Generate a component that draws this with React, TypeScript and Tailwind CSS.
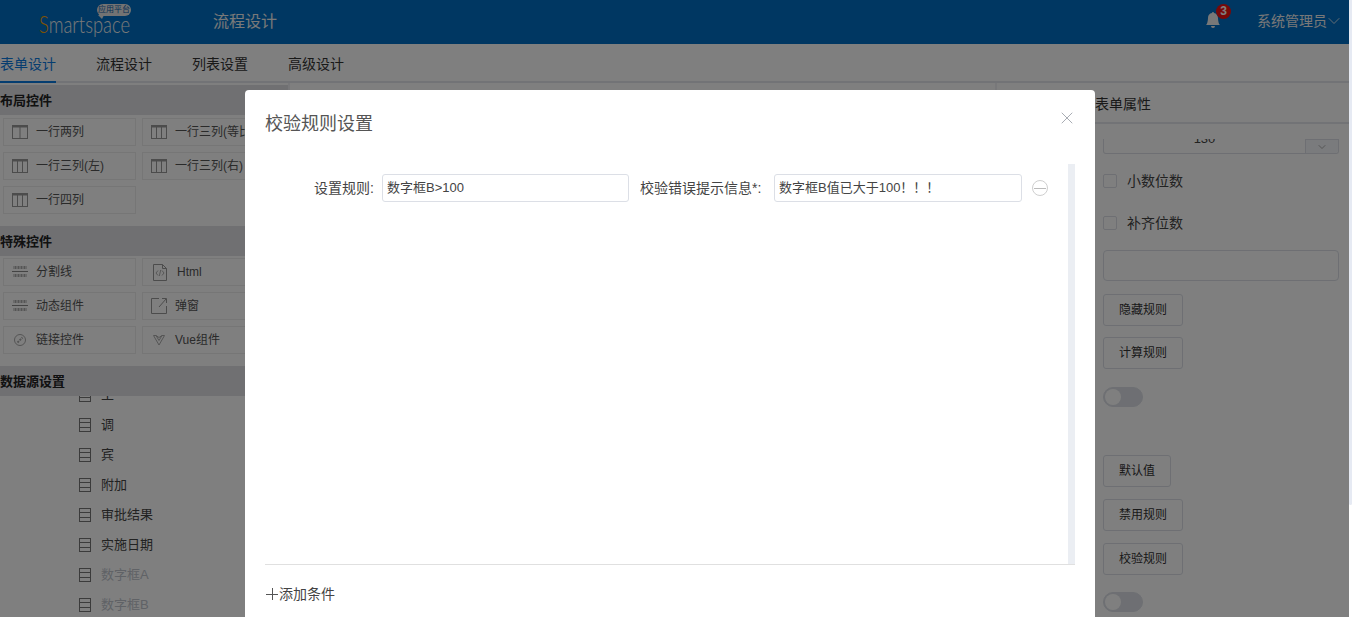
import { X, ChevronDown } from 'lucide-react';
import { BsBellFill } from 'react-icons/bs';

const TableIcon = ({ cols }: { cols: number }) => (
    <svg width="16" height="14" viewBox="0 0 16 14" fill="none" stroke="#999" className="shrink-0">
        <rect x="0.5" y="0.5" width="15" height="13" />
        <path d="M0 1.5H16" strokeWidth="2" />
        {cols === 2 && <path d="M8 2V14" />}
        {cols === 3 && <path d="M5.5 2V14M10.5 2V14" />}
    </svg>
);

const LineIcon = () => (
    <svg width="16" height="12" viewBox="0 0 16 12" fill="none" stroke="#aaa" className="shrink-0">
        <path d="M1.5 1.5H14.5" strokeWidth="3" strokeDasharray="1 0.5" />
        <path d="M0 5.5H16" stroke="#888" />
        <path d="M1.5 9.5H14.5" strokeWidth="3" strokeDasharray="1 0.5" />
    </svg>
);

const HtmlIcon = () => (
    <svg width="14" height="17" viewBox="0 0 14 17" fill="none" stroke="#999" className="shrink-0 ml-[2px]">
        <path d="M0.5 0.5H9.5L13.5 4.5V16.5H0.5Z" />
        <path d="M9.5 0.5V4.5H13.5" />
        <path d="M5 6.5L3 9L5 11.5M9 6.5L11 9L9 11.5M7.7 6L6.3 12" strokeWidth="0.8" />
    </svg>
);

const PopupIcon = () => (
    <svg width="16" height="16" viewBox="0 0 16 16" fill="none" stroke="#999" className="shrink-0">
        <path d="M8 0.5H0.5V15.5H15.5V8" />
        <path d="M15 1L8 9M11 0.5H15.5V5" />
    </svg>
);

const LinkIcon = () => (
    <svg width="16" height="14" viewBox="0 0 16 14" fill="none" stroke="#aaa" className="shrink-0">
        <circle cx="8" cy="7" r="5.5" />
        <path d="M5.5 9.5L10.5 4.5" strokeWidth="2" strokeDasharray="2 1" />
    </svg>
);

const VueIcon = () => (
    <svg width="16" height="11" viewBox="0 0 16 11" fill="none" stroke="#aaa" className="shrink-0">
        <path d="M2.5 0.5L8 10L13.5 0.5H11L8 5.5L5 0.5Z" />
        <path d="M5 0.5L8 2.5L11 0.5" />
    </svg>
);

const RowIcon = () => (
    <svg width="12" height="14" viewBox="0 0 12 14" fill="none" stroke="#777" className="shrink-0">
        <rect x="0.5" y="0.5" width="11" height="13" />
        <path d="M0 4.5H12M0 9.5H12" />
    </svg>
);

const Tile = ({ icon, label, gap = 'gap-[8px]' }: { icon: React.ReactNode; label: string; gap?: string }) => (
    <div className={`h-[28px] border border-[#ececec] flex items-center pl-[8px] text-[12px] text-[#555] whitespace-nowrap overflow-hidden ${gap}`}>
        {icon}
        <span>{label}</span>
    </div>
);

const SectionTitle = ({ children }: { children: string }) => (
    <div className="h-[30px] shrink-0 pt-[1px] bg-[#e0e1e5] flex items-center text-[13px] font-bold text-[#222]">{children}</div>
);

const Toggle = () => (
    <div className="w-[40px] h-[20px] rounded-full bg-[#dcdfe6] p-[1px] border border-[#dcdfe6]">
        <div className="w-[16px] h-[16px] rounded-full bg-white" />
    </div>
);

const RuleButton = ({ label, wide = true }: { label: string; wide?: boolean }) => (
    <div className={`h-[32px] border border-[#dcdfe6] rounded-[3px] flex items-center justify-center text-[12px] text-[#333] ${wide ? 'w-[80px]' : 'w-[68px]'}`}>
        {label}
    </div>
);

const Checkbox = ({ label }: { label: string }) => (
    <div className="flex items-center gap-[10px] h-[20px] text-[14px] text-[#444]">
        <div className="w-[14px] h-[14px] border border-[#dcdfe6] rounded-[2px]" />
        <span>{label}</span>
    </div>
);

const fields = [
    { label: '主', off: false },
    { label: '调', off: false },
    { label: '宾', off: false },
    { label: '附加', off: false },
    { label: '审批结果', off: false },
    { label: '实施日期', off: false },
    { label: '数字框A', off: true },
    { label: '数字框B', off: true },
];

export default function App() {
    return (
        <div className="w-[1352px] h-[617px] overflow-hidden flex bg-white font-['Liberation_Sans','Noto_Sans_CJK_SC',sans-serif]">
            <div className="relative w-[1349px] h-full overflow-hidden flex flex-col">
                <header className="h-[44px] shrink-0 bg-[#006fc4] flex items-center text-white">
                    <div className="relative w-[213px] h-full">
                        <div className="absolute left-[39px] top-[10px] origin-left scale-x-[0.8] font-['Lato',sans-serif] font-light text-[23px] leading-[28px] whitespace-nowrap text-[#f2f2f2]">
                            <span className="text-[#ffa500]">S</span>martspace
                        </div>
                        <div className="absolute left-[97px] top-[4px] w-[34px] h-[12px] rounded-full bg-[#e6e6e6] text-[8px] leading-[12px] text-center text-[#0a5ea8]">
                            应用平台
                            <div className="absolute left-[1px] -bottom-[3px] w-0 h-0 border-t-[4px] border-t-[#e6e6e6] border-l-[4px] border-l-transparent border-r-[2px] border-r-transparent" />
                        </div>
                    </div>
                    <span className="text-[16px] text-[#f2f2f2]">流程设计</span>
                    <div className="ml-auto flex items-center pr-[5px]">
                        <div className="relative mr-[36px] -mt-[4px]">
                            <BsBellFill size={16} className="text-[#f0f0f0]" />
                            <div className="absolute -top-[8px] left-[11px] w-[15px] h-[15px] rounded-full bg-[#f01010] text-[12px] leading-[15px] font-bold text-center text-white">3</div>
                        </div>
                        <span className="text-[14px] text-[#f0f0f0] -mt-[1px]">系统管理员</span>
                        <ChevronDown size={20} strokeWidth={1} className="text-[#f0f0f0] -ml-[3px] -mt-[3px]" />
                    </div>
                </header>

                <nav className="h-[39px] shrink-0 border-b-2 border-[#e4e6ec] flex gap-[40px] text-[14px] text-[#333]">
                    <div className="h-[39px] leading-[40px] border-b-2 border-[#0a7ae0] text-[#0a7ae0]">表单设计</div>
                    <div className="leading-[40px]">流程设计</div>
                    <div className="leading-[40px]">列表设置</div>
                    <div className="leading-[40px]">高级设计</div>
                </nav>

                <div className="flex flex-1 min-h-0">
                    <aside className="w-[288px] shrink-0 pt-[2px] flex flex-col overflow-hidden">
                        <SectionTitle>布局控件</SectionTitle>
                        <div className="grid grid-cols-[133px_133px] gap-x-[6px] gap-y-[6px] pl-[3px] pt-[3px] pb-[12px]">
                            <Tile icon={<TableIcon cols={2} />} label="一行两列" />
                            <Tile icon={<TableIcon cols={3} />} label="一行三列(等比)" />
                            <Tile icon={<TableIcon cols={3} />} label="一行三列(左)" />
                            <Tile icon={<TableIcon cols={3} />} label="一行三列(右)" />
                            <Tile icon={<TableIcon cols={3} />} label="一行四列" />
                        </div>
                        <SectionTitle>特殊控件</SectionTitle>
                        <div className="grid grid-cols-[133px_133px] gap-x-[6px] gap-y-[6px] pl-[3px] pt-[2px] pb-[12px]">
                            <Tile icon={<LineIcon />} label="分割线" />
                            <Tile icon={<HtmlIcon />} label="Html" gap="gap-[10px]" />
                            <Tile icon={<LineIcon />} label="动态组件" />
                            <Tile icon={<PopupIcon />} label="弹窗" />
                            <Tile icon={<LinkIcon />} label="链接控件" />
                            <Tile icon={<VueIcon />} label="Vue组件" />
                        </div>
                        <SectionTitle>数据源设置</SectionTitle>
                        <div className="flex-1 overflow-hidden">
                            <div className="-mt-[16px] pl-[79px]">
                                {fields.map((f) => (
                                    <div key={f.label} className={`h-[30px] flex items-center gap-[10px] text-[13px] ${f.off ? 'text-[#c0c4cc]' : 'text-[#444]'}`}>
                                        <RowIcon />
                                        <span>{f.label}</span>
                                    </div>
                                ))}
                            </div>
                        </div>
                    </aside>

                    <main className="flex-1 border-x-2 border-[#f0f1f4]" />

                    <aside className="w-[352px] shrink-0 flex flex-col">
                        <div className="h-[41px] shrink-0 border-b-2 border-[#e4e6ec] pl-[98px] text-[14px] leading-[42px] text-[#333]">表单属性</div>
                        <div className="h-[15px] shrink-0" />
                        <div className="flex-1 overflow-hidden pl-[106px] pr-[10px] flex flex-col items-start">
                            <div className="w-[236px] h-[15px] shrink-0 border-x border-b border-[#dcdfe6] rounded-b-[3px] flex overflow-hidden">
                                <div className="flex-1 text-center text-[13px] leading-[13px] -mt-[7px] text-[#444]">130</div>
                                <div className="w-[33px] border-l border-t border-[#dcdfe6] bg-[#f5f7fa] flex items-center justify-center">
                                    <ChevronDown size={12} strokeWidth={1.2} className="text-[#777]" />
                                </div>
                            </div>
                            <div className="mt-[17px]"><Checkbox label="小数位数" /></div>
                            <div className="mt-[22px]"><Checkbox label="补齐位数" /></div>
                            <div className="mt-[17px] w-[236px] h-[31px] shrink-0 border border-[#dcdfe6] rounded-[4px]" />
                            <div className="mt-[13px]"><RuleButton label="隐藏规则" /></div>
                            <div className="mt-[11px]"><RuleButton label="计算规则" /></div>
                            <div className="mt-[18px]"><Toggle /></div>
                            <div className="mt-[48px]"><RuleButton label="默认值" wide={false} /></div>
                            <div className="mt-[12px]"><RuleButton label="禁用规则" /></div>
                            <div className="mt-[12px]"><RuleButton label="校验规则" /></div>
                            <div className="mt-[17px]"><Toggle /></div>
                        </div>
                    </aside>
                </div>

                {/* mask + dialog */}
                <div className="absolute inset-0 bg-black/50" />
                <div className="absolute left-[245px] top-[90px] w-[850px] h-[560px] bg-white rounded-t-[4px] flex flex-col px-[20px]">
                    <div className="h-[74px] shrink-0 flex items-start pt-[22px] relative">
                        <span className="text-[18px] leading-[24px] text-[#555]">校验规则设置</span>
                        <X size={20} strokeWidth={1.1} className="absolute -right-[2px] top-[18px] text-[#a0a4ac]" />
                    </div>
                    <div className="h-[401px] shrink-0 flex border-b border-[#e0e0e0]">
                        <div className="flex-1 pt-[10px]">
                            <div className="flex items-center text-[14px] text-[#444]">
                                <span className="w-[109px] text-right">设置规则:</span>
                                <div className="ml-[8px] w-[247px] h-[28px] border border-[#dcdfe6] rounded-[3px] pl-[4px] text-[13px] leading-[26px] text-[#444]">数字框B&gt;100</div>
                                <span className="ml-[11px] w-[122px] whitespace-nowrap">校验错误提示信息*:</span>
                                <div className="ml-[12px] w-[248px] h-[28px] border border-[#dcdfe6] rounded-[3px] pl-[4px] text-[13px] leading-[26px] text-[#444] [text-spacing-trim:space-all]">数字框B值已大于100！！！</div>
                                <div className="ml-[10px] w-[16px] h-[16px] rounded-full border border-[#cfcfcf] flex items-center justify-center">
                                    <div className="w-[12px] h-px bg-[#bbb]" />
                                </div>
                            </div>
                        </div>
                        <div className="w-[7px] shrink-0 bg-[#ebeef3]" />
                    </div>
                    <div className="pt-[20px] text-[14px] leading-[18px] text-[#444] flex items-center">
                        <svg width="12" height="12" viewBox="0 0 12 12" stroke="#555" className="ml-[1px] mr-[1px]">
                            <path d="M0 6.5H12M6.5 0V12" />
                        </svg>
                        <span>添加条件</span>
                    </div>
                </div>
            </div>
            <div className="w-[3px] h-full">
                <div className="h-[505px] bg-[#e6eaf3] rounded-b-[2px]" />
            </div>
        </div>
    );
}
